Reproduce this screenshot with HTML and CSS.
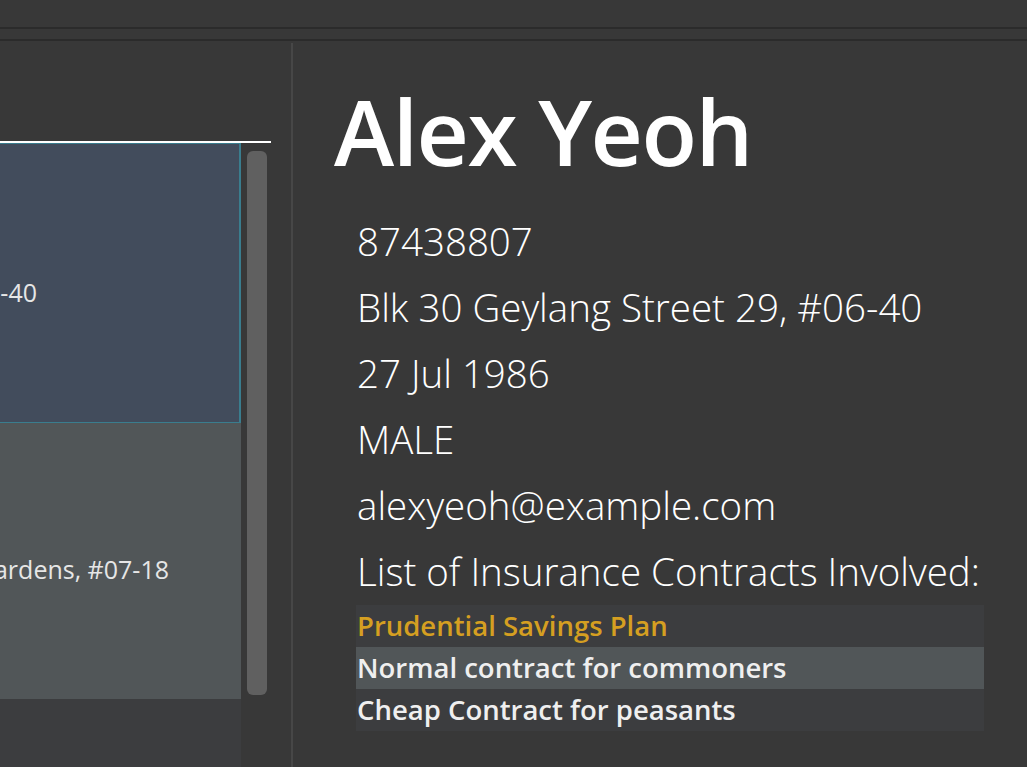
FILE: index.html
```html
<!DOCTYPE html>
<html lang="en">
<head>
<meta charset="utf-8">
<title>Address Book</title>
<link rel="stylesheet" href="styles.css">
</head>
<body>
<div class="app">
  <div class="menubar"></div>
  <div class="toolbar"></div>
  <div class="main">
    <div class="left">
      <div class="list-top"></div>
      <div class="list-area">
        <div class="cards">
          <div class="card card-selected">
            <div class="card-line card-line-a"><span>Blk 30 Geylang Street 29, #06-40</span></div>
          </div>
          <div class="card card-plain">
            <div class="card-line card-line-b"><span>Blk 30 Lorong 3 Serangoon Gardens, #07-18</span></div>
          </div>
          <div class="card-rest"></div>
        </div>
        <div class="scroll-track">
          <div class="scroll-thumb"></div>
        </div>
      </div>
    </div>
    <div class="divider"></div>
    <div class="detail">
      <h1 class="name">Alex Yeoh</h1>
      <div class="fields">
        <div class="field">87438807</div>
        <div class="field">Blk 30 Geylang Street 29, #06-40</div>
        <div class="field">27 Jul 1986</div>
        <div class="field">MALE</div>
        <div class="field">alexyeoh@example.com</div>
        <div class="field">List of Insurance Contracts Involved:</div>
      </div>
      <ul class="contracts">
        <li class="contract contract-gold">Prudential Savings Plan</li>
        <li class="contract contract-alt">Normal contract for commoners</li>
        <li class="contract">Cheap Contract for peasants</li>
      </ul>
    </div>
  </div>
</div>
</body>
</html>
```

FILE: styles.css
```css
html, body {
  margin: 0;
  padding: 0;
  background: #383838;
  height: 100%;
  overflow: hidden;
}
.app {
  width: 1027px;
  height: 767px;
  display: flex;
  flex-direction: column;
  background: #383838;
  font-family: "Open Sans", "Noto Sans", sans-serif;
  color: #ffffff;
}
.menubar {
  height: 27px;
  border-bottom: 2px solid #2b2b2b;
}
.toolbar {
  height: 10px;
  border-bottom: 2px solid #2b2b2b;
}
.main {
  flex: 1;
  display: flex;
  min-height: 0;
}
.left {
  width: 291px;
  display: flex;
  flex-direction: column;
  padding-top: 100px;
  box-sizing: border-box;
}
.list-top {
  width: 271px;
  height: 2px;
  background: #ffffff;
  flex: none;
}
.list-area {
  flex: 1;
  display: flex;
  min-height: 0;
}
.cards {
  width: 241px;
  display: flex;
  flex-direction: column;
  flex: none;
}
.card {
  box-sizing: border-box;
  flex: none;
  overflow: hidden;
  font-size: 25px;
  color: #e6e6e6;
}
.card-selected {
  height: 280px;
  background: #424c5c;
  border: 1px solid #3a7d8e;
  border-right-width: 2px;
  border-left: none;
  padding-top: 132px;
}
.card-plain {
  height: 276px;
  background: #515658;
  padding-top: 130px;
}
.card-rest {
  flex: 1;
  background: #3c3d3f;
}
.card-line {
  display: flex;
  justify-content: flex-end;
  white-space: nowrap;
  line-height: 32px;
}
.card-line-a { padding-right: 202px; }
.card-line-b { padding-right: 72px; }
.scroll-track {
  width: 50px;
  padding: 8px 0 0 6px;
  box-sizing: border-box;
}
.scroll-thumb {
  width: 20px;
  height: 544px;
  background: #606060;
  border-radius: 6px;
}
.divider {
  width: 2px;
  margin-top: 2px;
  background: #474747;
  flex: none;
}
.detail {
  flex: 1;
  padding-left: 41px;
  padding-top: 27px;
}
.name {
  margin: 0;
  font-size: 91px;
  font-weight: 600;
  line-height: 126px;
  letter-spacing: -1.5px;
}
.fields {
  padding-left: 23px;
  padding-top: 14px;
}
.field {
  font-size: 38.5px;
  font-weight: 300;
  line-height: 66px;
  height: 66px;
}
.field:last-child {
  height: 65px;
}
.contracts {
  list-style: none;
  margin: 2px 0 0 22px;
  padding: 0;
  width: 628px;
  background: #3c3d3f;
}
.contract {
  height: 42px;
  line-height: 42px;
  font-size: 27.5px;
  font-weight: 600;
  color: #efefef;
  padding-left: 1px;
}
.contract-alt {
  background: #515658;
}
.contract-gold {
  color: #d59f21;
}
```
